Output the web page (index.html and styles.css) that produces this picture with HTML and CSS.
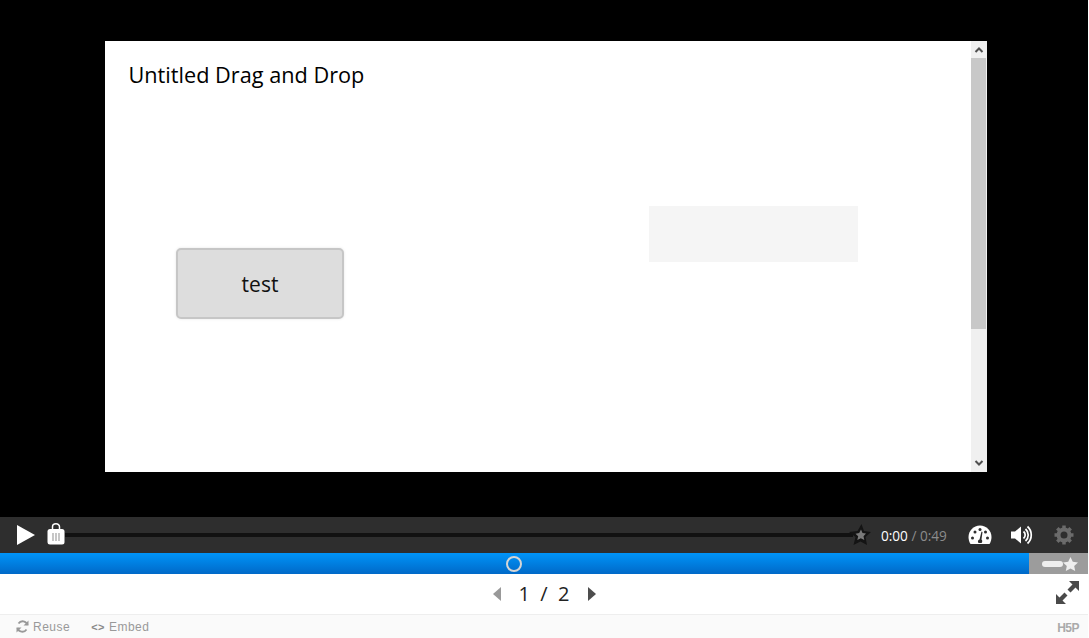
FILE: index.html
```html
<!DOCTYPE html>
<html lang="en">
<head>
    <meta charset="UTF-8">
    <meta name="viewport" content="width=device-width, initial-scale=1.0">
    <title>Untitled Drag and Drop</title>
    <link rel="stylesheet" href="styles.css">
</head>
<body>

    <div class="stage">
        <div class="slide">
            <div class="slide-content">
                <h2 class="task-title">Untitled Drag and Drop</h2>
                <div class="drag-item">test</div>
                <div class="drop-zone"></div>
            </div>
            <div class="scrollbar">
                <svg class="scroll-arrow" width="16" height="17" viewBox="0 0 16 17"><path d="M4.500 11 L8 7.500 L11.500 11" fill="none" stroke="#505050" stroke-width="2"/></svg>
                <div class="scroll-track"><div class="scroll-thumb"></div></div>
                <svg class="scroll-arrow" width="16" height="17" viewBox="0 0 16 17"><path d="M4.500 6 L8 9.500 L11.500 6" fill="none" stroke="#505050" stroke-width="2"/></svg>
            </div>
        </div>
    </div>

    <div class="controls">
        <svg class="play-icon" width="18" height="20" viewBox="0 0 18 20"><path d="M0 0 L18 10 L0 20 Z" fill="#fff"/></svg>
        <div class="timeline">
            <svg class="bookmark-icon" width="18" height="22" viewBox="0 0 18 22">
                <path d="M5.500 7 V3.800 a3.500 3 0 0 1 7 0 V7" fill="none" stroke="#fff" stroke-width="1.500"/>
                <rect x="0.500" y="6" width="17" height="15.500" rx="2.500" fill="#fff"/>
                <path d="M6 10 V18 M9 10 V18 M12 10 V18" stroke="#a9a9a9" stroke-width="1.300"/>
            </svg>
            <div class="track"></div>
            <svg class="end-star" width="22" height="22" viewBox="0 0 22 22">
                <path d="M12.500 0 L15 7 L22 8 L16.500 13 L18 21 L11.500 17.500 L4.500 21 L6.500 13 L0 8 L8.500 7 Z" fill="#141414"/>
                <path d="M12 5.500 L13.500 9 L17 9.500 L14.500 12.300 L15.300 16 L11.800 14.200 L8.300 16 L9.200 12.300 L6.500 9.800 L10.200 9 Z" fill="#7a7a7a"/>
            </svg>
        </div>
        <div class="time"><span class="time-now">0:00</span> / 0:49</div>
        <svg class="speed-icon" width="24" height="20" viewBox="0 0 24 20">
            <path d="M12 0.500 C5.500 0.500 0.500 5.800 0.500 12 C0.500 14.500 1.200 17 2.500 19 H21.500 C22.800 17 23.500 14.500 23.500 12 C23.500 5.800 18.500 0.500 12 0.500 Z" fill="#fff"/>
            <g fill="#2e2e2e">
                <circle cx="4.500" cy="13" r="1.500"/><circle cx="7" cy="7" r="1.500"/><circle cx="12" cy="4.500" r="1.500"/><circle cx="17.500" cy="7" r="1.500"/><circle cx="19.500" cy="13" r="1.500"/>
                <path d="M13.500 6.500 L14.500 7 L13.500 14.500 C14.500 15.500 14.500 17 13.500 18 H10.500 C9.500 17 9.800 15 11.500 14.500 Z"/>
            </g>
        </svg>
        <svg class="volume-icon" width="22" height="20" viewBox="0 0 22 20">
            <path d="M0 6.500 H4 L10 1.500 V18.500 L4 13.500 H0 Z" fill="#fff"/>
            <g fill="none" stroke="#fff" stroke-width="1.700">
                <path d="M12.500 6.500 a4.500 4.500 0 0 1 0 7"/>
                <path d="M14.500 4 a8 8 0 0 1 0 12"/>
                <path d="M16.500 1.500 a11.500 11.500 0 0 1 0 17"/>
            </g>
        </svg>
        <svg class="gear-icon" width="20" height="20" viewBox="0 0 20 20">
            <circle cx="10" cy="10" r="5.500" fill="none" stroke="#6b6b6b" stroke-width="4"/>
            <path d="M10 0.500 V19.500 M0.500 10 H19.500 M3.300 3.300 L16.700 16.700 M16.700 3.300 L3.300 16.700" stroke="#6b6b6b" stroke-width="3.500" stroke-dasharray="3.500 12"/>
        </svg>
    </div>

    <div class="progress">
        <div class="progress-fill"><span class="progress-knob"></span></div>
        <div class="progress-end">
            <span class="end-pill"></span>
            <svg width="15" height="14" viewBox="0 0 15 14"><path d="M7.500 0 L9.800 4.800 L15 5.400 L11.200 9 L12.200 14 L7.500 11.500 L2.800 14 L3.800 9 L0 5.400 L5.200 4.800 Z" fill="#eee"/></svg>
        </div>
    </div>

    <div class="nav">
        <div class="pager">
            <svg width="8" height="14" viewBox="0 0 8 14"><path d="M8 0 V14 L0 7 Z" fill="#999"/></svg>
            <span class="page-text">1 &nbsp;/&nbsp; 2</span>
            <svg width="8" height="14" viewBox="0 0 8 14"><path d="M0 0 V14 L8 7 Z" fill="#4d4d4d"/></svg>
        </div>
        <svg class="fullscreen-icon" width="23" height="23" viewBox="0 0 23 23">
            <g fill="#4a4a4a">
                <path d="M13 0 H23 V10 L19.500 6.500 L14.500 11.500 L11.500 8.500 L16.500 3.500 Z"/>
                <path d="M0 13 V23 H10 L6.500 19.500 L11.500 14.500 L8.500 11.500 L3.500 16.500 Z"/>
            </g>
        </svg>
    </div>

    <div class="footer">
        <svg class="reuse-icon" width="13" height="13" viewBox="0 0 13 13">
            <g fill="none" stroke="#999" stroke-width="1.800">
                <path d="M11.500 5 A5 5 0 0 0 2.500 3.500"/>
                <path d="M1.500 8 A5 5 0 0 0 10.500 9.500"/>
            </g>
            <path d="M12.500 0.500 V5.500 H7.500 Z M0.500 12.500 V7.500 H5.500 Z" fill="#999"/>
        </svg>
        <span class="footer-link">Reuse</span>
        <span class="footer-link embed"><b>&lt;&gt;</b> Embed</span>
        <span class="logo">H5P</span>
    </div>

</body>
</html>
```

FILE: styles.css
```css
html, body {
    margin: 0;
    padding: 0;
}
body {
    font-family: "Open Sans", sans-serif;
    width: 1088px;
    height: 638px;
    overflow: hidden;
}
html {
    background-color: #fff;
}
svg {
    display: block;
    flex-shrink: 0;
}
.stage {
    height: 517px;
    background-color: #000;
    padding: 41px 0 0 105px;
    box-sizing: border-box;
}
.slide {
    width: 882px;
    height: 431px;
    display: flex;
    background-color: #fff;
}
.slide-content {
    position: relative;
    flex: 1;
}
.task-title {
    margin: 0;
    padding: 18px 0 0 23.500px;
    font-size: 21.700px;
    font-weight: normal;
    line-height: 32px;
    color: #000;
}
/* items sit freely on the task canvas */
.drag-item {
    position: absolute;
    left: 71px;
    top: 207px;
    width: 164px;
    height: 67px;
    line-height: 68px;
    text-align: center;
    font-size: 21px;
    color: #111;
    background-color: #ddd;
    border: 2px solid #c6c6c6;
    border-radius: 5px;
    box-shadow: 0 0 3px rgba(0, 0, 0, 0.1);
}
.drop-zone {
    position: absolute;
    left: 544px;
    top: 165px;
    width: 209px;
    height: 56px;
    background-color: #f5f5f5;
}
.scrollbar {
    width: 16px;
    display: flex;
    flex-direction: column;
    background-color: #f0f0f0;
}
.scroll-track {
    flex: 1;
}
.scroll-thumb {
    width: 15px;
    height: 271px;
    background-color: #c8c8c8;
}
.controls {
    height: 36px;
    display: flex;
    align-items: center;
    background-color: #2e2e2e;
    padding-left: 17px;
}
.play-icon {
    margin-right: 12px;
}
.timeline {
    width: 824px;
    display: flex;
    align-items: center;
    margin-right: 10px;
}
.track {
    flex: 1;
    height: 4px;
    background-color: #111;
}
.bookmark-icon {
    margin-top: -3px;
}
.end-star {
    margin-left: -4px;
}
.time {
    width: 87px;
    font-size: 13.600px;
    color: #8c8c8c;
    white-space: nowrap;
}
.time-now {
    color: #fff;
}
.speed-icon {
    margin-right: 19px;
}
.volume-icon {
    margin-right: 21px;
}
.progress {
    height: 21px;
    display: flex;
}
.progress-fill {
    position: relative;
    flex: 1;
    background: linear-gradient(#0094f8, #0069c8);
}
.progress-knob {
    position: absolute;
    left: 506px;
    top: 3px;
    width: 12px;
    height: 12px;
    border: 2px solid #d5d5d5;
    border-radius: 50%;
}
.progress-end {
    width: 59px;
    display: flex;
    align-items: center;
    padding-left: 13px;
    box-sizing: border-box;
    background-color: #9c9c9c;
}
.end-pill {
    width: 21px;
    height: 6px;
    border-radius: 3px;
    background-color: #eee;
}
.nav {
    position: relative;
    height: 40px;
    display: flex;
    align-items: center;
    justify-content: center;
    background-color: #fff;
}
.pager {
    display: flex;
    align-items: center;
    gap: 18px;
}
.page-text {
    font-size: 20px;
    color: #222;
    line-height: 40px;
}
.fullscreen-icon {
    position: absolute;
    left: 1056px;
    top: 7px;
}
.footer {
    height: 23px;
    display: flex;
    align-items: center;
    padding-left: 16px;
    border-top: 1px solid #eee;
    background-color: #fafafa;
    font-family: "Liberation Sans", sans-serif;
    font-size: 12px;
    color: #999;
}
.footer-link {
    margin-left: 4px;
    letter-spacing: 0.500px;
}
.embed {
    margin-left: 21px;
}
.embed b {
    font-size: 11px;
    color: #888;
}
.logo {
    margin-left: auto;
    margin-right: 9px;
    padding-top: 3px;
    font-size: 12px;
    font-weight: bold;
    color: #aaa;
    letter-spacing: -0.500px;
}
```
